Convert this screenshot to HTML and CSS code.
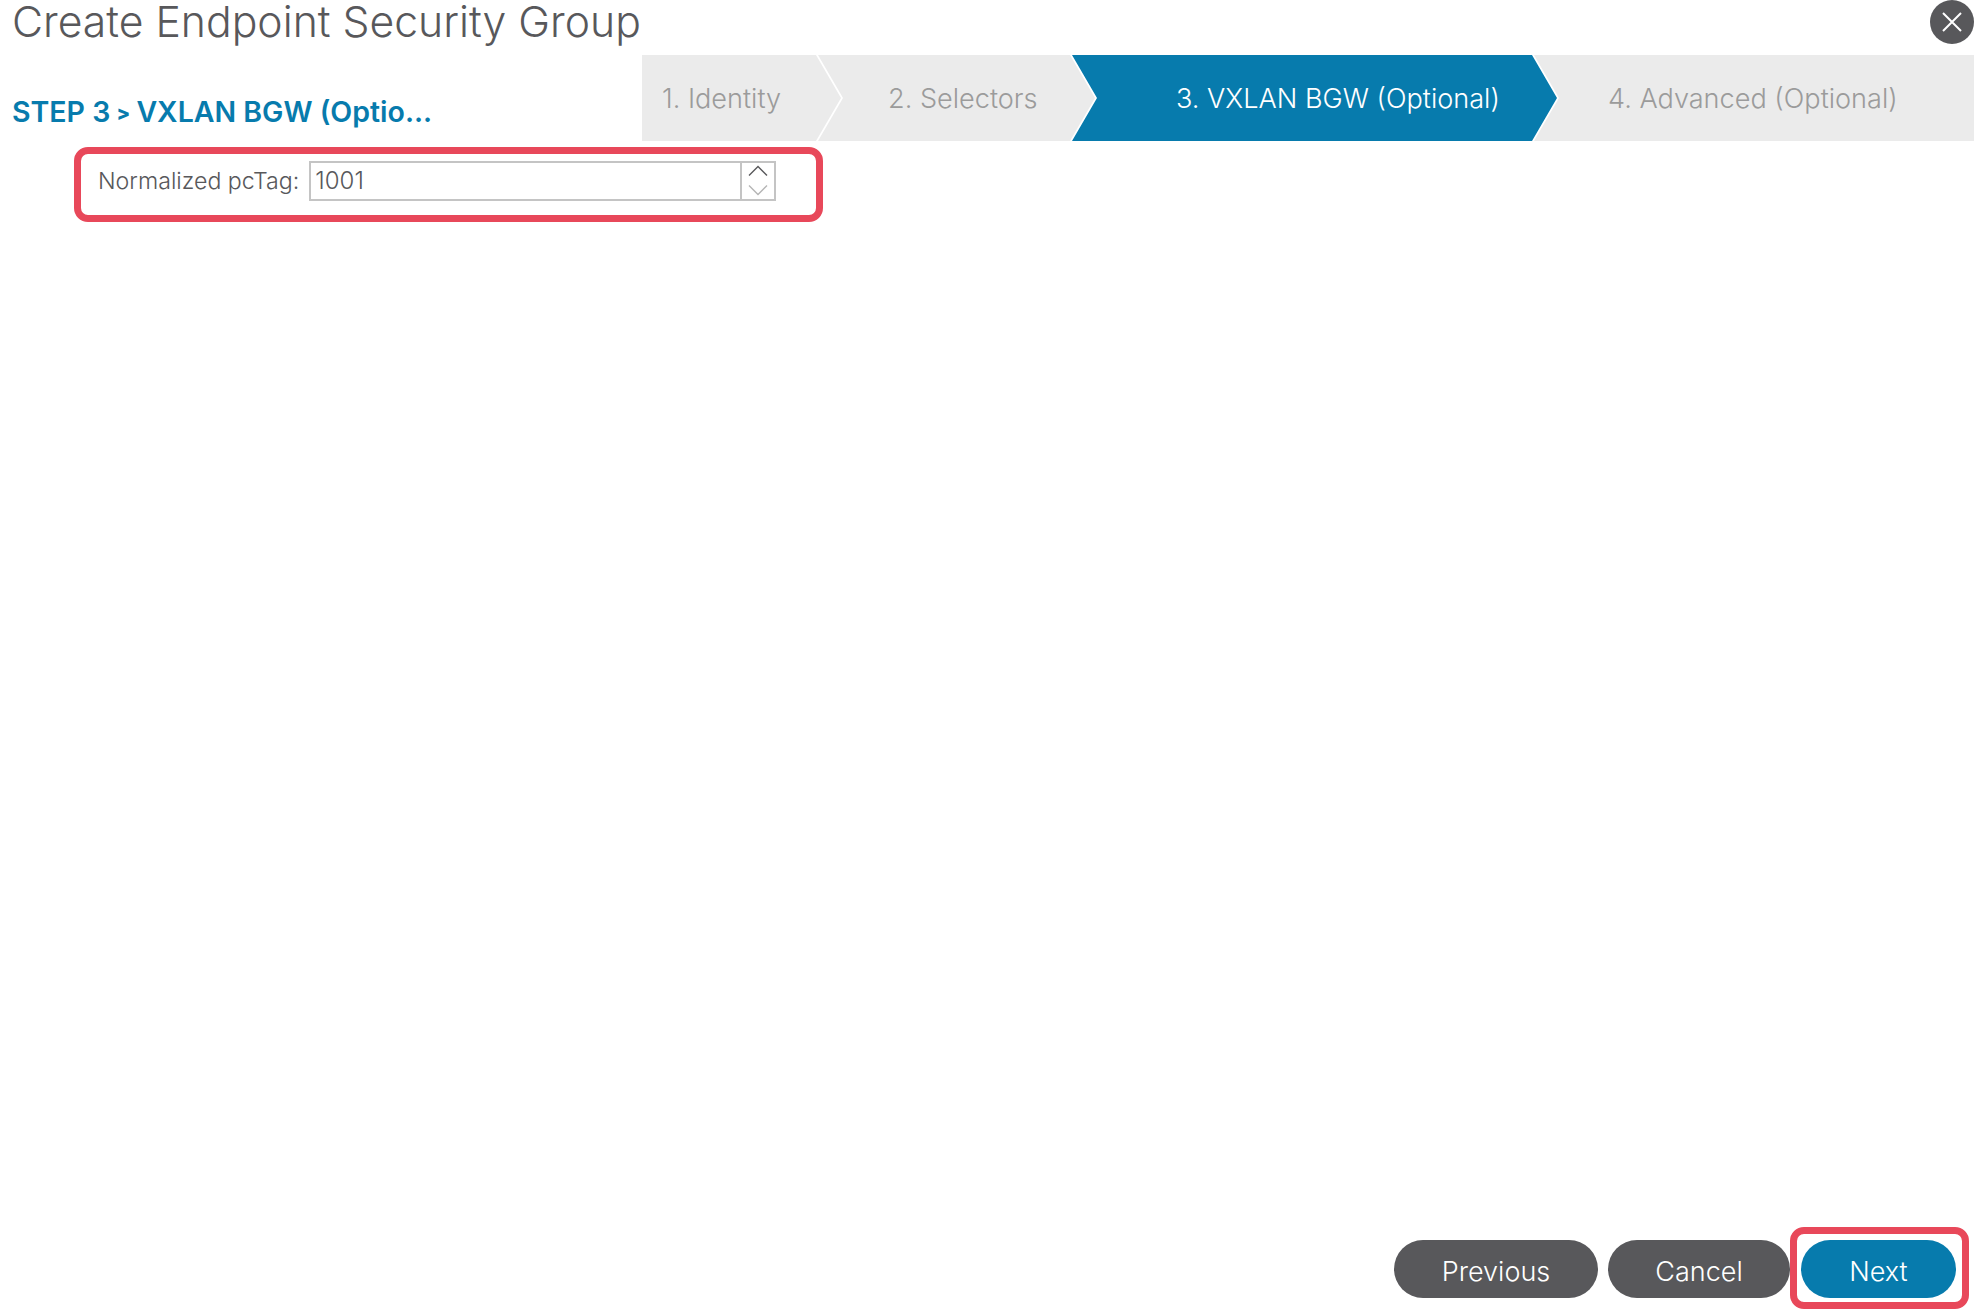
FILE: index.html
```html
<!DOCTYPE html>
<html lang="en">
<head>
    <meta charset="UTF-8">
    <title>Create Endpoint Security Group</title>
    <link rel="stylesheet" href="styles.css">
</head>
<body>
    <div class="dialog">
        <div class="title-row">
            <h1 class="title">Create Endpoint Security Group</h1>
            <button class="close-button" aria-label="Close">
                <svg width="22" height="22" viewBox="0 0 22 22"><path d="M2 2L20 20M20 2L2 20" stroke="#fff" stroke-width="2" fill="none"/></svg>
            </button>
        </div>

        <div class="wizard-row">
            <h2 class="step-name">STEP 3 <span class="step-arrow">&gt;</span> VXLAN BGW (Optio...</h2>
            <div class="steps">
                <div class="step step-first">1. Identity</div>
                <div class="step step-second">2. Selectors</div>
                <div class="step step-active">3. VXLAN BGW (Optional)</div>
                <div class="step step-last">4. Advanced (Optional)</div>
            </div>
        </div>

        <div class="highlight form-row">
            <label class="field-label" for="pctag">Normalized pcTag:</label>
            <div class="number-input">
                <input id="pctag" type="text" value="1001">
                <div class="spinner">
                    <svg width="20" height="12" viewBox="0 0 20 12"><path d="M1 10.5L10 1.5L19 10.5" stroke="#58585b" stroke-width="1.4" fill="none"/></svg>
                    <svg width="20" height="12" viewBox="0 0 20 12"><path d="M1 1.5L10 10.5L19 1.5" stroke="#b5b5b5" stroke-width="1.4" fill="none"/></svg>
                </div>
            </div>
        </div>

        <div class="footer">
            <button class="btn btn-previous">Previous</button>
            <button class="btn btn-cancel">Cancel</button>
            <div class="highlight next-box">
                <button class="btn btn-next">Next</button>
            </div>
        </div>
    </div>
</body>
</html>
```

FILE: styles.css
```css
body {
    margin: 0;
    background: #fff;
    font-family: Inter, "Open Sans", sans-serif;
    color: #58585b;
}

.dialog {
    height: 1310px;
    display: flex;
    flex-direction: column;
    overflow: hidden;
}

/* Title */
.title-row {
    height: 55px;
    display: flex;
    justify-content: space-between;
    align-items: flex-start;
}

.title {
    margin: 0 0 0 12px;
    font-size: 42.7px;
    font-weight: 300;
    line-height: 44px;
    white-space: nowrap;
}

.close-button {
    width: 44px;
    height: 44px;
    padding: 0;
    border: none;
    border-radius: 50%;
    background: #58585b;
    display: flex;
    align-items: center;
    justify-content: center;
}

/* Wizard steps */
.wizard-row {
    height: 86px;
    display: flex;
}

.step-name {
    width: 630px;
    margin: 0 0 0 12px;
    padding-top: 24px;
    font-size: 28.5px;
    font-weight: 600;
    line-height: 66px;
    color: #077bad;
    white-space: nowrap;
}

.step-arrow {
    font-size: 20px;
    font-weight: 800;
    vertical-align: 2px;
    margin: 0 -1px;
}

.steps {
    flex: 1;
    display: flex;
    height: 86px;
}

.step {
    box-sizing: border-box;
    height: 86px;
    display: flex;
    align-items: center;
    font-size: 27.1px;
    font-weight: 300;
    color: #9b9b9b;
    background: #ebebeb;
    white-space: nowrap;
    margin-left: -23px;
    clip-path: polygon(0 0, calc(100% - 25px) 0, 100% 50%, calc(100% - 25px) 100%, 0 100%, 25px 50%);
}

.step-first {
    width: 199px;
    margin-left: 0;
    padding-left: 20px;
    clip-path: polygon(0 0, calc(100% - 25px) 0, 100% 50%, calc(100% - 25px) 100%, 0 100%);
}

.step-second {
    width: 277px;
    padding-left: 70px;
}

.step-active {
    width: 485px;
    padding-left: 104px;
    background: #077bad;
    color: #fff;
}

.step-last {
    flex: 1;
    padding-left: 74px;
    clip-path: polygon(0 0, 100% 0, 100% 100%, 0 100%, 25px 50%);
}

/* Annotation boxes */
.highlight {
    box-sizing: border-box;
    border: 7px solid #e8485a;
    border-radius: 14px;
}

/* Form */
.form-row {
    width: 749px;
    height: 75px;
    margin: 6px 0 0 74px;
    padding: 0 0 8px 17px;
    display: flex;
    align-items: center;
    gap: 10px;
}

.field-label {
    font-size: 23.2px;
    font-weight: 300;
    white-space: nowrap;
}

.number-input {
    box-sizing: border-box;
    width: 467px;
    height: 40px;
    border: 2px solid #c4c4c4;
    display: flex;
}

.number-input input {
    flex: 1;
    min-width: 0;
    border: none;
    outline: none;
    padding: 0 0 0 4px;
    font-family: Inter, "Open Sans", sans-serif;
    font-size: 24px;
    font-weight: 300;
    color: #58585b;
}

.spinner {
    width: 32px;
    border-left: 2px solid #c4c4c4;
    display: flex;
    flex-direction: column;
    align-items: center;
    justify-content: center;
    gap: 7px;
}

/* Footer buttons */
.footer {
    margin-top: auto;
    height: 82px;
    display: flex;
    align-items: center;
    padding: 0 5px 1px 0;
    justify-content: flex-end;
    gap: 10px;
}

.btn {
    height: 58px;
    padding: 5px 0 0;
    border: none;
    border-radius: 29px;
    font-family: Inter, "Open Sans", sans-serif;
    font-size: 27px;
    font-weight: 300;
    color: #fff;
    background: #58585b;
}

.btn-previous {
    width: 204px;
    margin-top: 2px;
}

.btn-cancel {
    width: 182px;
    margin-top: 2px;
    margin-right: -10px;
}

.next-box {
    width: 179px;
    height: 82px;
    padding: 2px 6px 0 4px;
    display: flex;
    align-items: center;
}

.btn-next {
    width: 155px;
    background: #077bad;
}
```
